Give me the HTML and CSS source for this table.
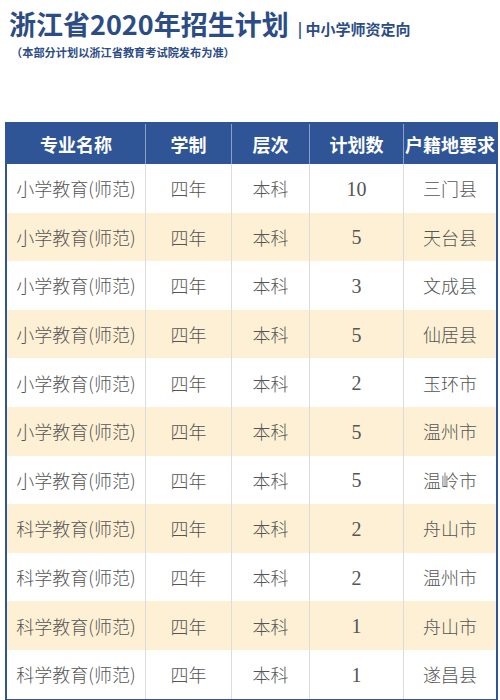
FILE: index.html
```html
<!DOCTYPE html>
<html lang="zh">
<head>
<meta charset="utf-8">
<link rel="stylesheet" href="styles.css">
</head>
<body>
<div class="page">
  <div class="title-line">
    <span class="title">浙江省2020年招生计划</span>
    <span class="subtitle">| 中小学师资定向</span>
  </div>
  <div class="note">（本部分计划以浙江省教育考试院发布为准）</div>
  <table class="plan">
    <colgroup>
      <col class="c1"><col class="c2"><col class="c3"><col class="c4"><col class="c5">
    </colgroup>
    <thead>
      <tr><th>专业名称</th><th>学制</th><th>层次</th><th>计划数</th><th>户籍地要求</th></tr>
    </thead>
    <tbody>
      <tr><td>小学教育(师范)</td><td>四年</td><td>本科</td><td class="num">10</td><td>三门县</td></tr>
      <tr class="alt"><td>小学教育(师范)</td><td>四年</td><td>本科</td><td class="num">5</td><td>天台县</td></tr>
      <tr><td>小学教育(师范)</td><td>四年</td><td>本科</td><td class="num">3</td><td>文成县</td></tr>
      <tr class="alt"><td>小学教育(师范)</td><td>四年</td><td>本科</td><td class="num">5</td><td>仙居县</td></tr>
      <tr><td>小学教育(师范)</td><td>四年</td><td>本科</td><td class="num">2</td><td>玉环市</td></tr>
      <tr class="alt"><td>小学教育(师范)</td><td>四年</td><td>本科</td><td class="num">5</td><td>温州市</td></tr>
      <tr><td>小学教育(师范)</td><td>四年</td><td>本科</td><td class="num">5</td><td>温岭市</td></tr>
      <tr class="alt"><td>科学教育(师范)</td><td>四年</td><td>本科</td><td class="num">2</td><td>舟山市</td></tr>
      <tr><td>科学教育(师范)</td><td>四年</td><td>本科</td><td class="num">2</td><td>温州市</td></tr>
      <tr class="alt"><td>科学教育(师范)</td><td>四年</td><td>本科</td><td class="num">1</td><td>舟山市</td></tr>
      <tr><td>科学教育(师范)</td><td>四年</td><td>本科</td><td class="num">1</td><td>遂昌县</td></tr>
    </tbody>
  </table>
</div>
</body>
</html>
```
FILE: styles.css
```css
html, body {
  margin: 0;
  padding: 0;
  background: #ffffff;
}
body {
  font-family: "Noto Sans CJK SC", "Noto Sans", sans-serif;
  width: 500px;
  height: 700px;
  overflow: hidden;
}
.page {
  padding: 5px 0 0 5px;
}
.title-line {
  display: flex;
  align-items: baseline;
  gap: 9px;
  padding-left: 4px;
  height: 38px;
}
.title {
  font-size: 27px;
  font-weight: 700;
  color: #2c4c85;
  line-height: 38px;
}
.subtitle {
  font-size: 15px;
  font-weight: 700;
  color: #2c4c85;
}
.note {
  font-size: 11.2px;
  font-weight: 700;
  color: #2c4c85;
  padding-left: 6px;
  line-height: 16px;
  margin-top: 1px;
}
.plan {
  margin-top: 62px;
  border-collapse: separate;
  border-spacing: 0;
  width: 493px;
  table-layout: fixed;
  border: 2px solid #2f5597;
  box-sizing: border-box;
}
.c1 { width: 138px; }
.c2 { width: 86px; }
.c3 { width: 78px; }
.c4 { width: 94px; }
.c5 { width: 93px; }
.plan th {
  background: #2f5597;
  color: #ffffff;
  font-size: 18px;
  font-weight: 700;
  height: 40px;
  padding: 0;
  border-left: 1px solid #8aa0c8;
  text-align: center;
  white-space: nowrap;
  box-sizing: border-box;
}
.plan th:first-child { border-left: none; }
.plan td {
  height: 48.6px;
  padding: 0;
  text-align: center;
  font-size: 18px;
  font-weight: 300;
  color: #555555;
  border-left: 1px solid #dcdcdc;
  white-space: nowrap;
  box-sizing: border-box;
}
.plan td:first-child { border-left: none; }
.plan tr.alt td {
  background: #fdf0d4;
}
.plan td.num {
  font-family: "Liberation Serif", "Noto Sans CJK SC", serif;
  font-size: 20px;
  font-weight: 400;
  padding-top: 2px;
}
```
